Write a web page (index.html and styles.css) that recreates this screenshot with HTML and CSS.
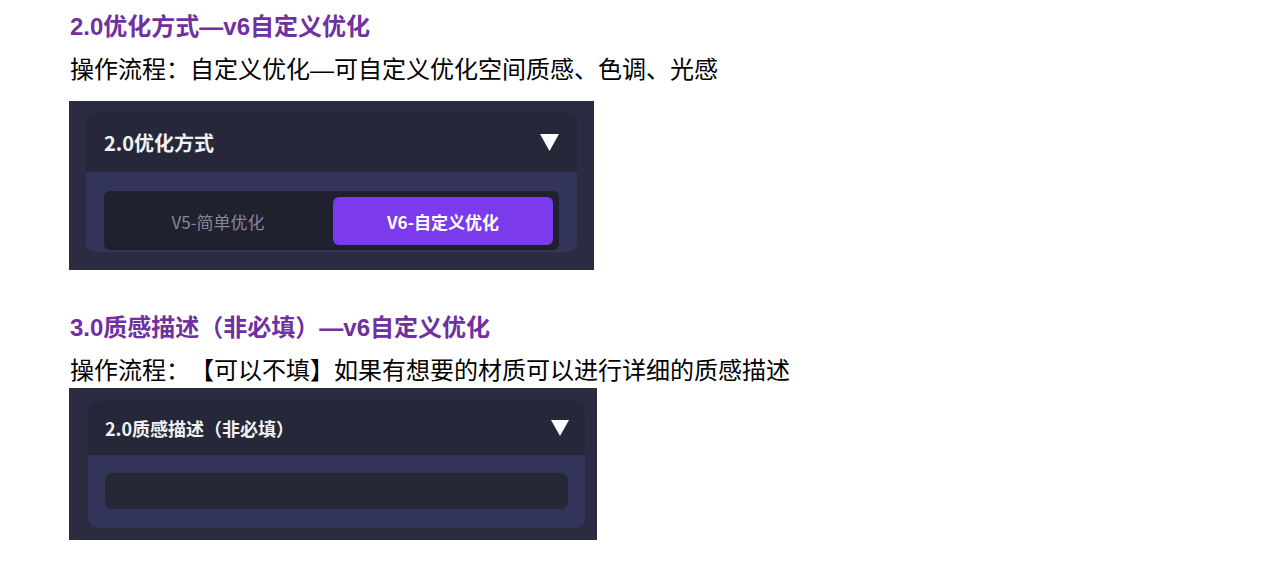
FILE: index.html
```html
<!DOCTYPE html>
<html lang="zh-CN">
<head>
<meta charset="utf-8">
<link rel="stylesheet" href="styles.css">
</head>
<body>
<main class="doc">
  <h2 class="title">2.0优化方式—v6自定义优化</h2>
  <p class="text">操作流程：自定义优化—可自定义优化空间质感、色调、光感</p>
  <div class="shot shot-1">
    <div class="card">
      <div class="card-head head-1">
        <span class="card-title">2.0优化方式</span>
        <svg class="caret" width="19" height="17" viewBox="0 0 19 17"><polygon points="0,0 19,0 9.5,17" fill="#ffffff"/></svg>
      </div>
      <div class="card-body body-1">
        <div class="segment">
          <div class="seg-item">V5-简单优化</div>
          <div class="seg-item seg-active">V6-自定义优化</div>
        </div>
      </div>
    </div>
  </div>

  <h2 class="title title-2">3.0质感描述（非必填）—v6自定义优化</h2>
  <p class="text text-2">操作流程：<span class="note">【可以不填】</span>如果有想要的材质可以进行详细的质感描述</p>
  <div class="shot shot-2">
    <div class="card card-2">
      <div class="card-head head-2">
        <span class="card-title title-sm">2.0质感描述（非必填）</span>
        <svg class="caret" width="18" height="16" viewBox="0 0 18 16"><polygon points="0,0 18,0 9,16" fill="#ffffff"/></svg>
      </div>
      <div class="card-body body-2">
        <div class="input"></div>
      </div>
    </div>
  </div>
</main>
</body>
</html>
```

FILE: styles.css
```css
html, body {
  margin: 0;
  padding: 0;
  background: #ffffff;
}

.doc {
  padding: 12px 0 0 70px;
  font-family: "Liberation Sans", "Noto Sans CJK SC", sans-serif;
  color: #000000;
}

.title {
  margin: 0;
  font-size: 24px;
  line-height: 30px;
  font-weight: bold;
  color: #7030a0;
}

.title-2 {
  margin-top: 43px;
}

.text {
  margin: 11px 0 0 0;
  font-size: 24px;
  line-height: 34px;
  font-weight: normal;
}

.note {
  margin-left: 12px;
}

.shot {
  margin-left: -1px;
  background: #2b2c42;
  overflow: hidden;
  font-family: "Noto Sans CJK SC", "Liberation Sans", sans-serif;
  box-sizing: border-box;
}

.shot-1 {
  margin-top: 14px;
  width: 525px;
  height: 169px;
  padding: 12px 17px 0 17px;
}

.shot-2 {
  margin-top: 0;
  width: 528px;
  height: 152px;
  padding: 13px 12px 0 19px;
}

.card {
  border-radius: 9px;
  overflow: hidden;
  background: #32345a;
}

.card-2 {
  height: 127px;
  border-radius: 10px;
}

.card-head {
  background: #262839;
  display: flex;
  align-items: center;
  justify-content: space-between;
  box-sizing: border-box;
}

.head-1 {
  height: 59px;
  padding: 0 18px 0 18px;
}

.head-2 {
  height: 54px;
  padding: 0 16px 0 17px;
}

.card-title {
  color: #f2f2f5;
  font-size: 20px;
  font-weight: bold;
}

.title-sm {
  font-size: 18px;
}

.caret {
  display: block;
}

.body-1 {
  padding: 19px 18px 20px 18px;
  height: 80px;
  box-sizing: border-box;
}

.segment {
  height: 59px;
  background: #20212f;
  border-radius: 6px;
  display: flex;
  padding: 6px 6px 5px 4px;
  box-sizing: border-box;
  gap: 5px;
}

.seg-item {
  flex: 1;
  display: flex;
  align-items: center;
  justify-content: center;
  font-size: 17px;
  color: #858797;
  border-radius: 6px;
}

.seg-active {
  background: #7b3aec;
  color: #ffffff;
  font-weight: bold;
}

.body-2 {
  padding: 18px 17px 0 17px;
}

.input {
  height: 36px;
  background: #262837;
  border-radius: 7px;
}
```
